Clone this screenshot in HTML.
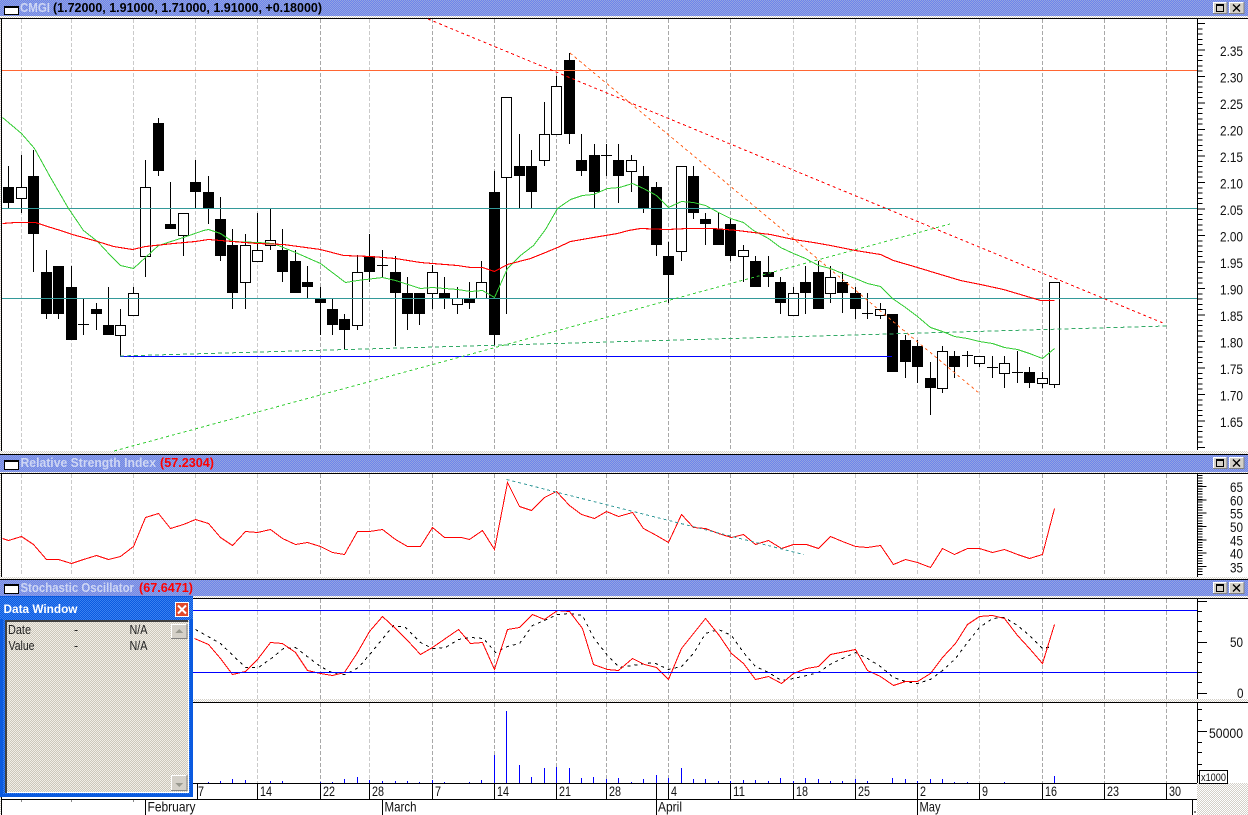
<!DOCTYPE html>
<html><head><meta charset="utf-8"><title>CMGI Chart</title>
<style>
html,body{margin:0;padding:0;background:#fff;width:1248px;height:815px;overflow:hidden}
svg{display:block;font-family:"Liberation Sans",sans-serif}
.c{shape-rendering:crispEdges}
</style></head><body>
<svg width="1248" height="815" viewBox="0 0 1248 815" xmlns="http://www.w3.org/2000/svg">
<defs>
<pattern id="b" width="2" height="2" patternUnits="userSpaceOnUse"><rect width="2" height="2" fill="#6c84ec"/><rect width="1" height="1" fill="#94a4e0"/><rect x="1" y="1" width="1" height="1" fill="#94a4e0"/></pattern>
<pattern id="g" width="2" height="2" patternUnits="userSpaceOnUse"><rect width="2" height="2" fill="#d4d0c8"/><rect width="1" height="1" fill="#fff"/><rect x="1" y="1" width="1" height="1" fill="#fff"/></pattern>
<pattern id="k" width="2" height="2" patternUnits="userSpaceOnUse"><rect width="2" height="2" fill="#cbc7bb"/><rect width="1" height="1" fill="#f2eee6"/><rect x="1" y="1" width="1" height="1" fill="#f2eee6"/></pattern>
<pattern id="w" width="2" height="2" patternUnits="userSpaceOnUse"><rect width="2" height="2" fill="#0a5ae0"/><rect width="1" height="1" fill="#3a80f0"/><rect x="1" y="1" width="1" height="1" fill="#3a80f0"/></pattern>
</defs>
<rect width="1248" height="815" fill="#fff"/>
<g class="c">
<!-- frame -->
<rect x="0" y="0" width="1" height="815" fill="url(#g)"/>
<rect x="1" y="0" width="1" height="815" fill="#000"/>
<!-- title bars -->
<rect x="0" y="0" width="1248" height="16" fill="url(#b)"/>
<rect x="0" y="16" width="1248" height="2" fill="url(#g)"/>
<rect x="0" y="18" width="1248" height="1" fill="#000"/>
<rect x="0" y="451" width="1248" height="3" fill="url(#g)"/>
<rect x="0" y="454" width="1248" height="1" fill="#000"/>
<rect x="0" y="455" width="1248" height="17" fill="url(#b)"/>
<rect x="0" y="472" width="1248" height="1" fill="url(#g)"/>
<rect x="0" y="473" width="1248" height="1" fill="#000"/>
<rect x="0" y="577" width="1248" height="2" fill="url(#g)"/>
<rect x="0" y="579" width="1248" height="1" fill="#000"/>
<rect x="0" y="580" width="1248" height="16" fill="url(#b)"/>
<rect x="0" y="596" width="1248" height="2" fill="url(#g)"/>
<rect x="0" y="598" width="1248" height="1" fill="#000"/>
<rect x="0" y="699" width="1248" height="3" fill="url(#g)"/>
<rect x="0" y="702" width="1248" height="1" fill="#000"/>
<!-- grid -->
<path fill="none" stroke="#cacaca" stroke-dasharray="4 2" d="M21.5 19V450M71.5 19V450M133.5 19V450M195.5 19V450M257.5 19V450M369.5 19V450M793.5 19V450M855.5 19V450M917.5 19V450M979.5 19V450M21.5 474V576M71.5 474V576M133.5 474V576M195.5 474V576M257.5 474V576M369.5 474V576M793.5 474V576M855.5 474V576M917.5 474V576M979.5 474V576M257.5 599V699M369.5 599V699M793.5 599V699M855.5 599V699M917.5 599V699M979.5 599V699M257.5 703V783M369.5 703V783M793.5 703V783M855.5 703V783M917.5 703V783M979.5 703V783"/>
<path fill="none" stroke="#a8a8a8" stroke-dasharray="4 2" d="M320.5 19V450M432.5 19V450M494.5 19V450M556.5 19V450M606.5 19V450M668.5 19V450M730.5 19V450M1042.5 19V450M1104.5 19V450M1166.5 19V450M320.5 474V576M432.5 474V576M494.5 474V576M556.5 474V576M606.5 474V576M668.5 474V576M730.5 474V576M1042.5 474V576M1104.5 474V576M1166.5 474V576M320.5 599V699M432.5 599V699M494.5 599V699M556.5 599V699M606.5 599V699M668.5 599V699M730.5 599V699M1042.5 599V699M1104.5 599V699M1166.5 599V699M320.5 703V783M432.5 703V783M494.5 703V783M556.5 703V783M606.5 703V783M668.5 703V783M730.5 703V783M1042.5 703V783M1104.5 703V783M1166.5 703V783"/>
<!-- candles -->
<path fill="none" stroke="#000" transform="translate(.5 0)" d="M8 166V208M21 155V213M33 150V272M46 250V319M58 266V319M71 266V340M83 298V335M96 303V330M108 287V335M120 309V356M133 287V315M145 160V277M158 118V176M170 182V229M183 213V256M195 160V208M208 176V224M220 197V261M232 229V309M245 234V309M257 213V261M270 208V250M282 229V282M295 250V293M307 266V298M320 287V335M332 298V335M344 314V350M357 255V330M369 234V282M382 250V277M395 256V346M407 277V330M419 293V325M432 265V309M444 277V309M457 287V314M469 282V309M481 261V298M494 171V346M506 97V314M519 134V208M531 150V208M544 102V166M556 76V134M569 53V144M581 134V176M594 144V208M606 144V176M618 144V203M631 155V192M643 166V213M656 182V256M668 242V303M681 166V261M693 166V219M705 213V245M718 213V245M730 219V261M743 245V282M755 256V287M768 256V287M780 277V314M793 287V315M805 266V314M818 261V309M830 266V303M842 272V313M855 287V319M867 293V319M880 303V319M892 314V372M905 335V378M917 340V383M930 362V415M942 346V393M954 351V378M967 351V367M979 356V367M992 356V378M1004 356V388M1017 351V383M1029 367V388M1042 372V388M1054 282V388"/>
<path fill="none" stroke="#000" d="M78 324.5h11M377 265.5h11M601 155.5h11M862 313.5h11M962 355.5h11M987 367.5h11M1012 372.5h11"/>
<path fill="#000" d="M3 187h11V203h-11zM28 176h11V234h-11zM41 272h11V314h-11zM53 266h11V314h-11zM66 287h11V340h-11zM91 309h11V314h-11zM103 325h11V335h-11zM153 123h11V171h-11zM165 224h11V229h-11zM190 182h11V192h-11zM203 192h11V208h-11zM215 219h11V256h-11zM227 245h11V293h-11zM277 250h11V272h-11zM290 261h11V293h-11zM302 282h11V287h-11zM315 299h11V303h-11zM327 309h11V325h-11zM339 319h11V330h-11zM364 256h11V272h-11zM390 272h11V293h-11zM402 293h11V314h-11zM414 293h11V314h-11zM439 293h11V298h-11zM464 298h11V303h-11zM489 192h11V335h-11zM514 166h11V176h-11zM526 166h11V192h-11zM564 60h11V134h-11zM576 160h11V171h-11zM589 155h11V192h-11zM613 160h11V176h-11zM638 176h11V208h-11zM651 187h11V245h-11zM663 256h11V275h-11zM688 176h11V213h-11zM700 219h11V224h-11zM713 229h11V245h-11zM725 224h11V256h-11zM750 261h11V287h-11zM763 272h11V277h-11zM775 282h11V303h-11zM800 282h11V293h-11zM813 272h11V309h-11zM837 282h11V293h-11zM850 293h11V309h-11zM887 314h11V372h-11zM900 340h11V362h-11zM912 346h11V367h-11zM925 378h11V388h-11zM949 356h11V367h-11zM1024 372h11V383h-11z"/>
<path fill="#fff" stroke="#000" d="M16.5 187.5h10V198.5h-10zM115.5 325.5h10V335.5h-10zM128.5 293.5h10V315.5h-10zM140.5 187.5h10V256.5h-10zM178.5 213.5h10V235.5h-10zM240.5 245.5h10V282.5h-10zM252.5 250.5h10V261.5h-10zM265.5 240.5h10V245.5h-10zM352.5 272.5h10V325.5h-10zM427.5 272.5h10V293.5h-10zM452.5 298.5h10V304.5h-10zM476.5 282.5h10V298.5h-10zM501.5 97.5h10V177.5h-10zM539.5 134.5h10V160.5h-10zM551.5 86.5h10V134.5h-10zM626.5 160.5h10V171.5h-10zM676.5 166.5h10V251.5h-10zM738.5 250.5h10V256.5h-10zM788.5 293.5h10V315.5h-10zM825.5 277.5h10V293.5h-10zM875.5 309.5h10V315.5h-10zM937.5 351.5h10V388.5h-10zM974.5 356.5h10V363.5h-10zM999.5 363.5h10V373.5h-10zM1037.5 378.5h10V383.5h-10zM1049.5 282.5h10V384.5h-10z"/>
<!-- horizontals -->
<path stroke="#ff6633" d="M2 70.5H1197"/>
<path stroke="#339999" d="M2 208.5H1197M2 298.5H1197"/>
<path stroke="#0000ff" d="M120 356.5H892"/>
<!-- trend lines -->
<path stroke="#ff0000" stroke-dasharray="3 3" d="M428 19L1163 323"/>
<path stroke="#ff6622" stroke-dasharray="3 3" d="M570 53L979 393"/>
<path stroke="#33cc33" stroke-dasharray="3 3" d="M114 451L950 224"/>
<path stroke="#33aa66" stroke-dasharray="4 3" d="M120 356L1167 326"/>
<!-- MAs -->
<g transform="translate(.5 .5)" fill="none">
<polyline stroke="#33cc33" points="2,117 21,133 34,148 50,177 68,208 83,230 97,241 110,255 120,265 133,268 145,257 158,245 183,237 203,230 208,229 220,233 232,241 257,242 273,243 295,252 320,263 345,282 357,280 382,277 395,280 420,288 432,287 444,288 457,289 470,291 482,290 494,297 507,268 520,255 533,245 545,229 557,208 570,199 582,195 593,194 607,188 619,187 632,183 643,188 656,195 668,207 681,201 693,202 705,205 718,212 730,218 743,222 753,230 768,238 780,247 793,253 805,258 818,265 830,268 842,273 855,278 867,283 880,286 892,298 905,307 917,316 930,327 942,331 954,336 967,338 979,341 992,343 1004,347 1017,349 1029,353 1042,358 1054,348"/>
<polyline stroke="#ff0000" stroke-width="1.100" points="2,223 15,222 35,222 47,226 60,230 72,234 97,241 113,246 132,249 145,246 173,243 195,241 208,239 232,241 257,243 283,244 320,249 343,255 370,256 395,258 420,262 432,263 457,265 470,267 482,267 494,271 507,264 530,258 545,252 557,247 570,241 593,237 617,233 628,230 640,228 667,229 687,228 713,228 737,230 753,232 770,234 793,239 813,242 830,245 855,250 880,254 893,260 917,267 940,274 960,280 980,284 1003,289 1030,297 1040,300 1054,300"/>
<!-- RSI -->
<polyline stroke="#ff0000" points="2,538 8,540 21,536 33,544 46,559 58,559 71,563 83,559 96,555 108,559 120,556 133,546 145,517 158,513 170,528 183,524 195,519 208,523 220,537 232,545 245,531 257,532 270,529 282,538 295,544 307,542 320,546 332,552 344,554 357,531 369,531 382,529 395,539 407,546 420,546 432,527 444,537 461,537 469,539 482,530 494,549 507,482 519,506 531,510 544,497 556,491 569,505 581,514 594,518 606,511 618,516 632,512 643,528 656,535 668,542 681,514 693,527 705,528 718,533 731,537 743,534 755,544 768,540 781,548 793,544 806,544 818,548 830,536 842,541 855,546 867,547 880,545 893,564 905,559 917,562 930,567 942,548 954,554 967,548 979,548 992,552 1004,549 1017,554 1029,558 1042,554 1054,508"/>
<path stroke="#339999" stroke-dasharray="3 3" d="M506 479L803 554"/>
<!-- Stoch -->
<polyline stroke="#000" stroke-dasharray="3 4" points="195,629 220,643 245,667 258,667 272,657 283,648 295,647 308,657 320,666 333,673 345,674 358,667 370,653 393,625 405,627 420,642 432,648 445,647 458,639 470,637 483,638 495,652 507,646 519,643 532,625 544,620 557,614 569,613 582,615 593,637 607,655 619,667 632,665 653,662 668,669 681,666 693,653 705,633 718,629 731,635 743,652 755,666 768,672 781,680 793,678 806,675 818,672 831,663 855,652 867,658 880,666 893,677 905,681 917,683 930,679 942,670 955,658 967,642 979,627 992,618 1004,617 1017,625 1029,635 1042,648 1052,646"/>
<polyline stroke="#ff0000" points="194,638 208,644 220,658 232,674 245,671 257,659 270,642 282,643 295,652 307,670 320,673 332,675 344,672 357,652 369,631 382,616 395,628 407,640 420,654 432,647 458,629 470,643 482,642 494,669 507,629 519,627 532,614 544,619 557,610 569,611 582,628 593,664 607,669 618,670 632,658 644,664 656,667 668,679 681,648 705,618 718,634 731,653 743,663 755,679 768,676 781,683 793,673 806,668 818,666 830,654 855,649 867,670 880,676 893,685 905,681 917,681 930,673 942,657 955,643 967,624 979,616 992,615 1004,618 1017,635 1029,648 1042,663 1054,624"/>
</g>
<path stroke="#0000ff" d="M2 610.5H1197M2 672.5H1197"/>
<!-- Volume -->
<path stroke="#0000ff" transform="translate(.5 0)" d="M208 783V782M220 783V781M232 783V779M245 783V780M270 783V781M282 783V781M320 783V782M332 783V782M344 783V779M357 783V777M369 783V780M382 783V781M395 783V781M407 783V781M419 783V782M432 783V780M444 783V782M469 783V782M481 783V780M494 783V755M506 783V711M519 783V765M531 783V777M544 783V768M556 783V767M569 783V768M581 783V778M593 783V777M606 783V779M618 783V778M631 783V782M643 783V779M656 783V775M668 783V778M681 783V768M693 783V779M705 783V779M718 783V781M730 783V781M743 783V780M755 783V780M768 783V781M780 783V778M793 783V781M805 783V778M818 783V779M830 783V781M842 783V781M855 783V779M867 783V781M892 783V778M905 783V779M917 783V781M930 783V779M942 783V779M954 783V782M967 783V782M1004 783V782M1054 783V776"/>
<!-- right axes -->
<path stroke="#000" d="M1197.5 18V450M1197.5 474V577M1197.5 599V699M1197.5 703V783"/>
<line x1="1200" x2="1200" y1="23" y2="450" stroke="#000" stroke-width="5" stroke-dasharray="1 4.3"/>
<line x1="1201" x2="1201" y1="23" y2="450" stroke="#000" stroke-width="8" stroke-dasharray="1 25.5"/>
<line x1="1200" x2="1200" y1="475" y2="576" stroke="#000" stroke-width="5" stroke-dasharray="1 1.67"/>
<line x1="1202" x2="1202" y1="486" y2="576" stroke="#000" stroke-width="9" stroke-dasharray="1 12.33"/>
<path stroke="#000" d="M1198 601.5h9M1198 611.5h4M1198 621.5h4M1198 631.5h4M1198 642.5h9M1198 652.5h4M1198 662.5h4M1198 672.5h4M1198 682.5h4M1198 693.5h9"/>
<path stroke="#000" d="M1198 709.5h4M1198 720.5h4M1198 731.5h9M1198 742.5h4M1198 752.5h4M1198 764.5h4M1198 775.5h4"/>
<!-- date axis -->
<rect x="1197" y="783" width="51" height="32" fill="url(#g)"/>
<rect x="1199.5" y="770.5" width="28" height="13" fill="#fff" stroke="#000"/>
<path stroke="#000" d="M190 783.5H1197M2 799.5H1197M197.5 783V799M257.5 783V799M320.5 783V799M369.5 783V799M432.5 783V799M494.5 783V799M556.5 783V799M606.5 783V799M656.5 783V815M668.5 783V799M730.5 783V799M793.5 783V799M855.5 783V799M917.5 783V815M979.5 783V799M1042.5 783V799M1104.5 783V799M1166.5 783V799M145.5 799V815M382.5 799V815M1192.5 799V815M1194 812h2"/>
<path stroke="#888" d="M21.5 800v2M71.5 800v2M133.5 800v2"/>
<!-- title bar widgets -->
<g fill="#fff" stroke="#000"><rect x="4.5" y="6.5" width="14" height="8"/><rect x="4.5" y="460.5" width="14" height="9"/><rect x="4.5" y="584.5" width="14" height="9"/></g>
<path stroke="#000" d="M4 7.5h15M4 461.5h15M4 585.5h15"/>
<g fill="#d4d0c8"><rect x="1213" y="2" width="14" height="12"/><rect x="1229" y="2" width="15" height="12"/><rect x="1213" y="457" width="14" height="12"/><rect x="1229" y="457" width="15" height="12"/><rect x="1213" y="582" width="14" height="12"/><rect x="1229" y="582" width="15" height="12"/></g>
<path fill="none" stroke="#fff" d="M1213.5 13V2.5H1227M1229.5 13V2.5H1244M1213.5 468V457.5H1227M1229.5 468V457.5H1244M1213.5 593V582.5H1227M1229.5 593V582.5H1244"/>
<path fill="none" stroke="#808080" d="M1213 13.5H1227V2M1229 13.5H1244V2M1213 468.5H1227V457M1229 468.5H1244V457M1213 593.5H1227V582M1229 593.5H1244V582"/>
<path fill="none" stroke="#000" d="M1216.5 4.5h7v7h-7zM1216 5.5h8M1216.5 459.5h7v7h-7zM1216 460.5h8M1216.5 584.5h7v7h-7zM1216 585.5h8"/>
</g>
<g fill="none" stroke="#000" stroke-width="1.4"><path d="M1233 4.5l7 7M1240 4.5l-7 7M1233 459.5l7 7M1240 459.5l-7 7M1233 584.5l7 7M1240 584.5l-7 7"/></g>
<!-- title text -->
<g font-weight="bold" font-size="12.5">
<text x="20" y="12" fill="#ced6f4" textLength="30" lengthAdjust="spacingAndGlyphs">CMGI</text>
<text x="53" y="12" fill="#000" textLength="269" lengthAdjust="spacingAndGlyphs">(1.72000, 1.91000, 1.71000, 1.91000, +0.18000)</text>
<text x="20.5" y="467" fill="#ced6f4" textLength="135.5" lengthAdjust="spacingAndGlyphs">Relative Strength Index</text>
<text x="160" y="467" fill="#ff0000" textLength="54" lengthAdjust="spacingAndGlyphs">(57.2304)</text>
<text x="20.5" y="592" fill="#ced6f4" textLength="113.5" lengthAdjust="spacingAndGlyphs">Stochastic Oscillator</text>
<text x="139" y="592" fill="#ff0000" textLength="54" lengthAdjust="spacingAndGlyphs">(67.6471)</text>
</g>
<!-- axis labels -->
<g font-size="14" fill="#111" text-anchor="start">
<text x="1220" y="56" textLength="23" lengthAdjust="spacingAndGlyphs">2.35</text>
<text x="1220" y="82.5" textLength="23" lengthAdjust="spacingAndGlyphs">2.30</text>
<text x="1220" y="109" textLength="23" lengthAdjust="spacingAndGlyphs">2.25</text>
<text x="1220" y="135.5" textLength="23" lengthAdjust="spacingAndGlyphs">2.20</text>
<text x="1220" y="162" textLength="23" lengthAdjust="spacingAndGlyphs">2.15</text>
<text x="1220" y="188.5" textLength="23" lengthAdjust="spacingAndGlyphs">2.10</text>
<text x="1220" y="215" textLength="23" lengthAdjust="spacingAndGlyphs">2.05</text>
<text x="1220" y="241.5" textLength="23" lengthAdjust="spacingAndGlyphs">2.00</text>
<text x="1220" y="268" textLength="23" lengthAdjust="spacingAndGlyphs">1.95</text>
<text x="1220" y="294.5" textLength="23" lengthAdjust="spacingAndGlyphs">1.90</text>
<text x="1220" y="321" textLength="23" lengthAdjust="spacingAndGlyphs">1.85</text>
<text x="1220" y="347.5" textLength="23" lengthAdjust="spacingAndGlyphs">1.80</text>
<text x="1220" y="374" textLength="23" lengthAdjust="spacingAndGlyphs">1.75</text>
<text x="1220" y="400.5" textLength="23" lengthAdjust="spacingAndGlyphs">1.70</text>
<text x="1220" y="427" textLength="23" lengthAdjust="spacingAndGlyphs">1.65</text>
<text x="1230" y="492" textLength="13" lengthAdjust="spacingAndGlyphs">65</text>
<text x="1230" y="505.5" textLength="13" lengthAdjust="spacingAndGlyphs">60</text>
<text x="1230" y="518.5" textLength="13" lengthAdjust="spacingAndGlyphs">55</text>
<text x="1230" y="532" textLength="13" lengthAdjust="spacingAndGlyphs">50</text>
<text x="1230" y="545.5" textLength="13" lengthAdjust="spacingAndGlyphs">45</text>
<text x="1230" y="558.5" textLength="13" lengthAdjust="spacingAndGlyphs">40</text>
<text x="1230" y="572.5" textLength="13" lengthAdjust="spacingAndGlyphs">35</text>
<text x="1230" y="647" textLength="13" lengthAdjust="spacingAndGlyphs">50</text>
<text x="1237" y="698" textLength="6.5" lengthAdjust="spacingAndGlyphs">0</text>
<text x="1209" y="738" textLength="34" lengthAdjust="spacingAndGlyphs">50000</text>
<text x="1201" y="781" font-size="11" textLength="25" lengthAdjust="spacingAndGlyphs">x1000</text>
<text x="198" y="796" textLength="6" lengthAdjust="spacingAndGlyphs">7</text>
<text x="260" y="796" textLength="12" lengthAdjust="spacingAndGlyphs">14</text>
<text x="323" y="796" textLength="12" lengthAdjust="spacingAndGlyphs">22</text>
<text x="372" y="796" textLength="12" lengthAdjust="spacingAndGlyphs">28</text>
<text x="435" y="796" textLength="6" lengthAdjust="spacingAndGlyphs">7</text>
<text x="497" y="796" textLength="12" lengthAdjust="spacingAndGlyphs">14</text>
<text x="559" y="796" textLength="12" lengthAdjust="spacingAndGlyphs">21</text>
<text x="609" y="796" textLength="12" lengthAdjust="spacingAndGlyphs">28</text>
<text x="671" y="796" textLength="6" lengthAdjust="spacingAndGlyphs">4</text>
<text x="733" y="796" textLength="12" lengthAdjust="spacingAndGlyphs">11</text>
<text x="796" y="796" textLength="12" lengthAdjust="spacingAndGlyphs">18</text>
<text x="858" y="796" textLength="12" lengthAdjust="spacingAndGlyphs">25</text>
<text x="920" y="796" textLength="6" lengthAdjust="spacingAndGlyphs">2</text>
<text x="982" y="796" textLength="6" lengthAdjust="spacingAndGlyphs">9</text>
<text x="1045" y="796" textLength="12" lengthAdjust="spacingAndGlyphs">16</text>
<text x="1107" y="796" textLength="12" lengthAdjust="spacingAndGlyphs">23</text>
<text x="1169" y="796" textLength="12" lengthAdjust="spacingAndGlyphs">30</text>
<text x="147.500" y="811.5" textLength="48" lengthAdjust="spacingAndGlyphs">February</text>
<text x="384.500" y="811.5" textLength="32" lengthAdjust="spacingAndGlyphs">March</text>
<text x="658" y="811.5" textLength="24" lengthAdjust="spacingAndGlyphs">April</text>
<text x="919.500" y="811.5" textLength="21" lengthAdjust="spacingAndGlyphs">May</text>
</g>
<!-- data window -->
<g class="c">
<rect x="0" y="596" width="193" height="201" fill="#0a5ae0"/>
<rect x="0" y="597" width="193" height="22" fill="url(#w)"/>
<rect x="3" y="619" width="187" height="175" fill="url(#w)"/>
<rect x="5" y="620" width="184" height="173" fill="url(#k)"/>
<path fill="none" stroke="#404040" stroke-width="2" d="M6 793V621H188"/>
<path fill="none" stroke="#fff" d="M188.500 622V792.500H7"/>
<rect x="175.500" y="602.500" width="13" height="14" fill="#e0482a" stroke="#fff"/>
<rect x="171" y="624" width="16" height="15" fill="#d4d0c8"/>
<rect x="171" y="775" width="16" height="16" fill="#d4d0c8"/>
<path fill="none" stroke="#fff" d="M171.500 638V624.500H187M171.500 790V775.500H187"/>
<path fill="none" stroke="#808080" d="M171 638.500H187V624M171 790.500H187V775"/>
<path fill="#9a9a90" d="M179 629l4 4h-8zM179 787l-4-4h8z"/>
</g>
<path stroke="#fff" stroke-width="2" d="M178 605.500l8 8M186 605.500l-8 8"/>
<text x="3.500" y="613" font-size="12" font-weight="bold" fill="#fff" textLength="74" lengthAdjust="spacingAndGlyphs">Data Window</text>
<g font-size="12.5" fill="#222">
<text x="8" y="634" textLength="23" lengthAdjust="spacingAndGlyphs">Date</text>
<text x="8.500" y="650" textLength="26" lengthAdjust="spacingAndGlyphs">Value</text>
<text x="74" y="634">-</text><text x="74" y="650">-</text>
<text x="129.500" y="634" textLength="18" lengthAdjust="spacingAndGlyphs">N/A</text>
<text x="129.500" y="650" textLength="18" lengthAdjust="spacingAndGlyphs">N/A</text>
</g>
</svg>
</body></html>
